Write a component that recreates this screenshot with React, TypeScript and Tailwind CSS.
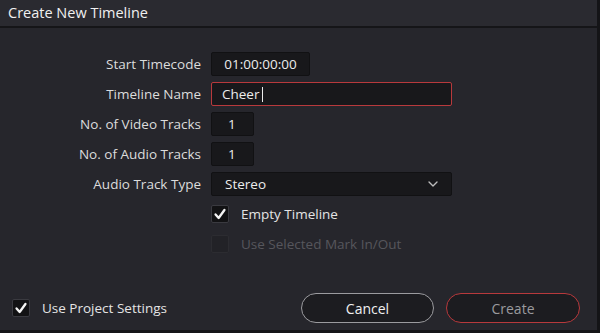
import { ChevronDown } from "lucide-react";

const font = { fontFamily: '"Open Sans", "Liberation Sans", sans-serif' };

const Check = () => (
  <svg viewBox="0 0 18 18" className="h-[18px] w-[18px]">
    <path
      d="M4 9.5 L7.5 13.5 L14 4.5"
      fill="none"
      stroke="#f4f4f4"
      strokeWidth="2.6"
      strokeLinecap="round"
      strokeLinejoin="round"
    />
  </svg>
);

const CheckRow = ({
  label,
  checked,
  disabled,
}: {
  label: string;
  checked?: boolean;
  disabled?: boolean;
}) => (
  <div className="flex h-6 items-center gap-3">
    <div
      className={`flex h-[18px] w-[18px] items-center justify-center rounded-[2px] border ${
        disabled
          ? "border-[#2c2c31] bg-[#222227]"
          : "border-[#3a3a40] bg-[#121214]"
      }`}
    >
      {checked && <Check />}
    </div>
    <span
      className={`text-[13.5px] ${disabled ? "text-[#56565c]" : "text-[#e4e4e4]"}`}
    >
      {label}
    </span>
  </div>
);

const Field = ({
  className,
  children,
}: {
  className: string;
  children?: React.ReactNode;
}) => (
  <div
    className={`flex h-6 items-center rounded-[2px] border border-[#111113] bg-[#18181b] text-[13.5px] text-[#ececec] ${className}`}
  >
    {children}
  </div>
);

const Label = ({ children }: { children: React.ReactNode }) => (
  <span className="flex h-6 items-center justify-end text-[13.5px] text-[#dcdcdc]">
    {children}
  </span>
);

export default function App() {
  return (
    <div className="flex h-[333px] w-[600px] bg-[#141417]" style={font}>
      <div className="flex w-[597px] flex-col">
        <div className="flex h-[26px] items-center bg-[#2a2a30] px-2 text-[14.5px] text-[#f0f0f0]">
          Create New Timeline
        </div>
        <div className="h-[2px] bg-[#151518]" />
        <div className="flex flex-1 flex-col bg-[#26262c]">
          <div className="grid grid-cols-[201px_1fr] gap-x-[10px] gap-y-[6px] pt-6">
            <Label>Start Timecode</Label>
            <Field className="w-[99px] justify-center">01:00:00:00</Field>

            <Label>Timeline Name</Label>
            <div className="flex h-6 w-[241px] items-center rounded-[2px] border border-[#b8393c] bg-[#18181b] pl-[10px] text-[13.5px] text-[#ececec]">
              Cheer
              <span className="ml-[3px] h-[15px] w-px bg-[#ececec]" />
            </div>

            <Label>No. of Video Tracks</Label>
            <Field className="w-[43px] pl-[16px]">1</Field>

            <Label>No. of Audio Tracks</Label>
            <Field className="w-[43px] pl-[16px]">1</Field>

            <Label>Audio Track Type</Label>
            <Field className="w-[241px] justify-between pl-[13px] pr-[10px]">
              Stereo
              <ChevronDown className="h-4 w-4 text-[#bdbdbd]" strokeWidth={2} />
            </Field>

            <span />
            <CheckRow label="Empty Timeline" checked />

            <span />
            <CheckRow label="Use Selected Mark In/Out" disabled />
          </div>

          <div className="mt-auto flex items-center justify-between pb-[7px] pl-3 pr-[17px]">
            <CheckRow label="Use Project Settings" checked />
            <div className="flex gap-[12px]">
              <button className="h-[30px] w-[133px] rounded-full border-[1.5px] border-[#9b9b9f] bg-[#1c1c20] text-[14px] text-[#f0f0f0]">
                Cancel
              </button>
              <button className="h-[30px] w-[134px] rounded-full border-[1.5px] border-[#b8393c] bg-[#1c1c20] text-[14px] text-[#9a9a9e]">
                Create
              </button>
            </div>
          </div>
          <div className="h-[3px] bg-[#151518]" />
        </div>
      </div>
    </div>
  );
}
